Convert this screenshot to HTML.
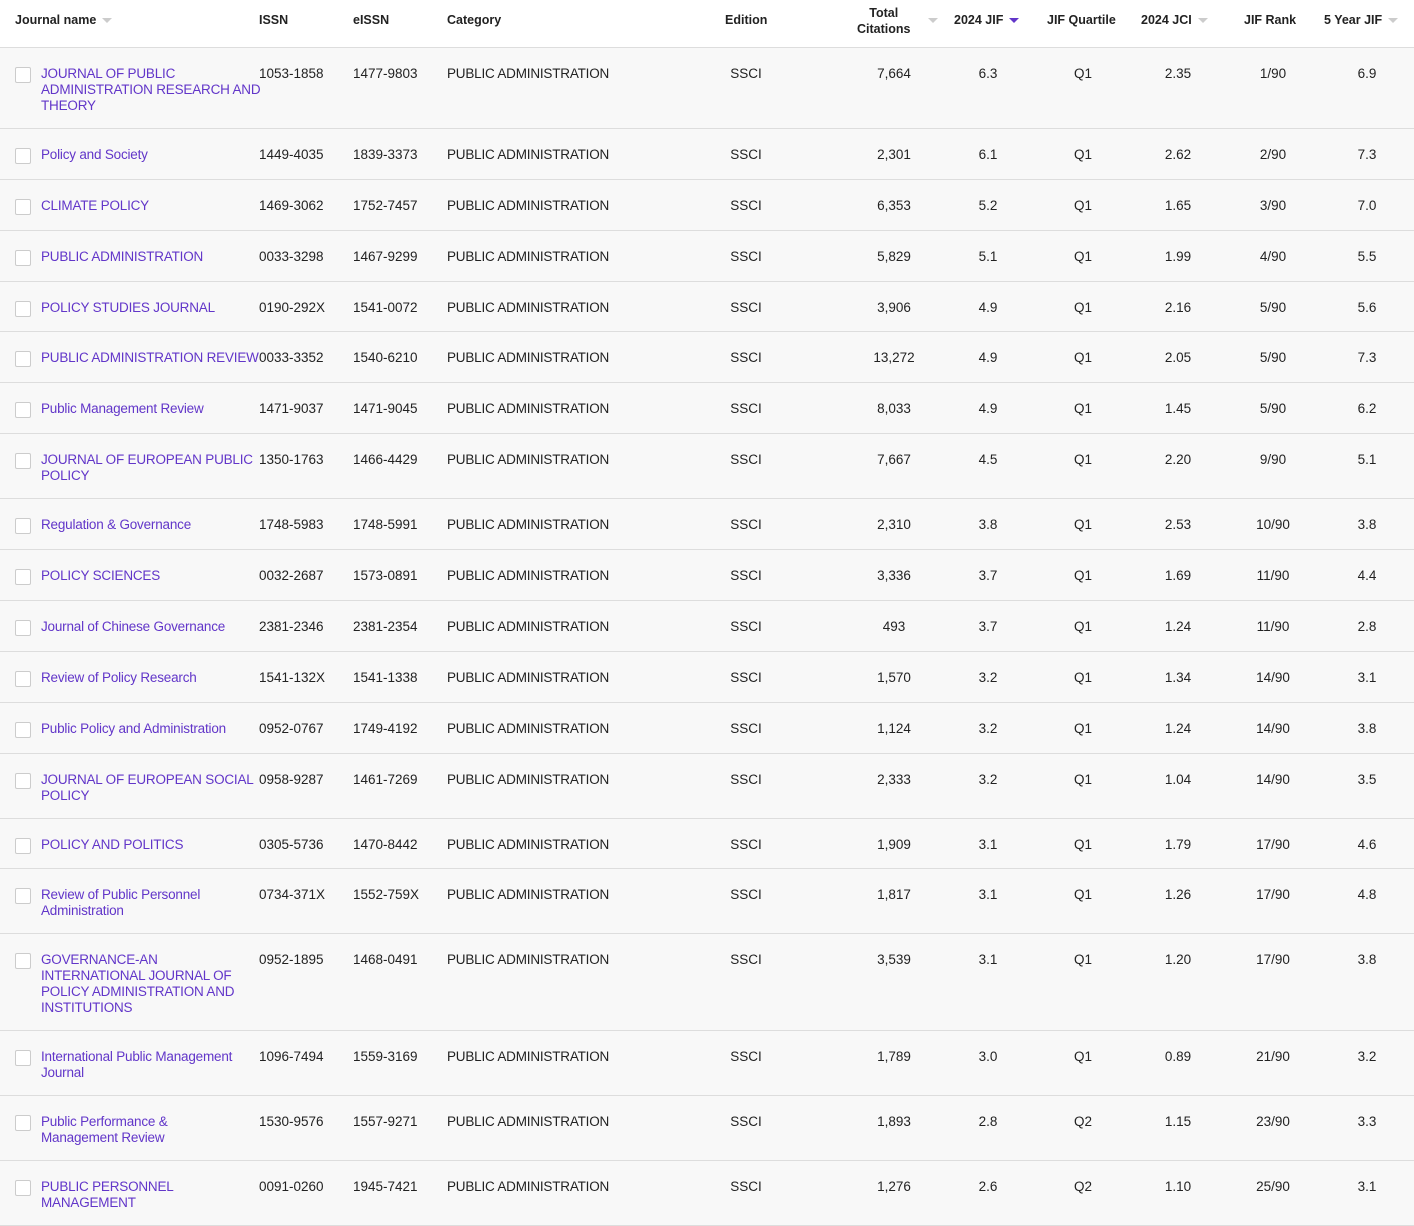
<!DOCTYPE html>
<html><head><meta charset="utf-8"><style>
body{margin:0;width:1414px;height:1219px;overflow:hidden;background:#fff;font-family:"Liberation Sans",sans-serif;font-size:13.5px;color:#222;}
.hd{position:relative;height:47px;border-bottom:1px solid #ddd;background:#fff;font-weight:bold;font-size:12.5px;color:#222;}
.hd span{position:absolute;white-space:nowrap;}
.ar{display:inline-block;width:0;height:0;border-left:5px solid transparent;border-right:5px solid transparent;border-top:5px solid #ccc;vertical-align:middle;margin-left:6px;}
.row{position:relative;background:#f8f8f8;border-bottom:1px solid #ddd;box-sizing:border-box;}
.row div{position:absolute;top:18px;line-height:16px;white-space:nowrap;}
.cb{width:14px;height:14px;border:1px solid #ccc;background:#fff;border-radius:2px;left:15px;top:19px!important;}
.nm{left:41px;color:#6236c9;letter-spacing:-0.2px;font-size:13.5px}
.cat{letter-spacing:-0.2px}
.c{width:94px;text-align:center;}
</style></head><body>
<div class="hd">
<span style="left:15px;top:13px">Journal name<i class="ar"></i></span>
<span style="left:259px;top:13px">ISSN</span>
<span style="left:353px;top:13px">eISSN</span>
<span style="left:447px;top:13px">Category</span>
<span style="left:725px;top:13px">Edition</span>
<span style="left:857px;top:5px;text-align:center;line-height:16px">Total<br>Citations</span>
<span style="left:928px;top:13px"><i class="ar" style="margin:0"></i></span>
<span style="left:954px;top:13px">2024 JIF<i class="ar" style="border-top-color:#6236c9"></i></span>
<span style="left:1047px;top:13px">JIF Quartile</span>
<span style="left:1141px;top:13px">2024 JCI<i class="ar"></i></span>
<span style="left:1244px;top:13px">JIF Rank</span>
<span style="left:1324px;top:13px">5 Year JIF<i class="ar"></i></span>
</div>
<div id="t"></div>
<script>
const d=[
[81,"JOURNAL OF PUBLIC<br>ADMINISTRATION RESEARCH AND<br>THEORY","1053-1858","1477-9803","7,664","6.3","Q1","2.35","1/90","6.9"],
[51,"Policy and Society","1449-4035","1839-3373","2,301","6.1","Q1","2.62","2/90","7.3"],
[51,"CLIMATE POLICY","1469-3062","1752-7457","6,353","5.2","Q1","1.65","3/90","7.0"],
[51,"PUBLIC ADMINISTRATION","0033-3298","1467-9299","5,829","5.1","Q1","1.99","4/90","5.5"],
[50,"POLICY STUDIES JOURNAL","0190-292X","1541-0072","3,906","4.9","Q1","2.16","5/90","5.6"],
[51,"PUBLIC ADMINISTRATION REVIEW","0033-3352","1540-6210","13,272","4.9","Q1","2.05","5/90","7.3"],
[51,"Public Management Review","1471-9037","1471-9045","8,033","4.9","Q1","1.45","5/90","6.2"],
[65,"JOURNAL OF EUROPEAN PUBLIC<br>POLICY","1350-1763","1466-4429","7,667","4.5","Q1","2.20","9/90","5.1"],
[51,"Regulation &amp; Governance","1748-5983","1748-5991","2,310","3.8","Q1","2.53","10/90","3.8"],
[51,"POLICY SCIENCES","0032-2687","1573-0891","3,336","3.7","Q1","1.69","11/90","4.4"],
[51,"Journal of Chinese Governance","2381-2346","2381-2354","493","3.7","Q1","1.24","11/90","2.8"],
[51,"Review of Policy Research","1541-132X","1541-1338","1,570","3.2","Q1","1.34","14/90","3.1"],
[51,"Public Policy and Administration","0952-0767","1749-4192","1,124","3.2","Q1","1.24","14/90","3.8"],
[65,"JOURNAL OF EUROPEAN SOCIAL<br>POLICY","0958-9287","1461-7269","2,333","3.2","Q1","1.04","14/90","3.5"],
[50,"POLICY AND POLITICS","0305-5736","1470-8442","1,909","3.1","Q1","1.79","17/90","4.6"],
[65,"Review of Public Personnel<br>Administration","0734-371X","1552-759X","1,817","3.1","Q1","1.26","17/90","4.8"],
[97,"GOVERNANCE-AN<br>INTERNATIONAL JOURNAL OF<br>POLICY ADMINISTRATION AND<br>INSTITUTIONS","0952-1895","1468-0491","3,539","3.1","Q1","1.20","17/90","3.8"],
[65,"International Public Management<br>Journal","1096-7494","1559-3169","1,789","3.0","Q1","0.89","21/90","3.2"],
[65,"Public Performance &amp;<br>Management Review","1530-9576","1557-9271","1,893","2.8","Q2","1.15","23/90","3.3"],
[65,"PUBLIC PERSONNEL<br>MANAGEMENT","0091-0260","1945-7421","1,276","2.6","Q2","1.10","25/90","3.1"]];
let h="";
for(const r of d){
h+=`<div class="row" style="height:${r[0]}px"><div class="cb"></div><div class="nm">${r[1]}</div>
<div style="left:259px">${r[2]}</div><div style="left:353px">${r[3]}</div><div class="cat" style="left:447px">PUBLIC ADMINISTRATION</div>
<div class="c" style="left:699px">SSCI</div><div class="c" style="left:847px">${r[4]}</div><div class="c" style="left:941px">${r[5]}</div>
<div class="c" style="left:1036px">${r[6]}</div><div class="c" style="left:1131px">${r[7]}</div><div class="c" style="left:1226px">${r[8]}</div><div class="c" style="left:1320px">${r[9]}</div></div>`;}
document.getElementById("t").innerHTML=h;
</script>
</body></html>
